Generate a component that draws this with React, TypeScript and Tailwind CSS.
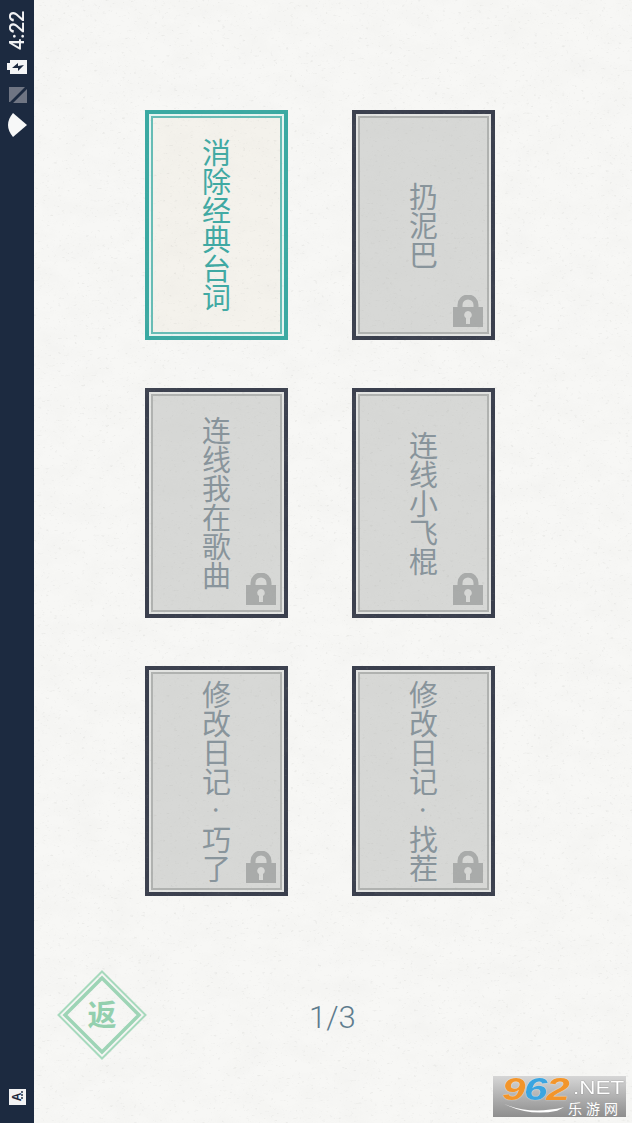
const cards = [
  { title: "消除经典台词", active: true },
  { title: "扔泥巴" },
  { title: "连线我在歌曲" },
  { title: "连线小飞棍" },
  { title: "修改日记·巧了" },
  { title: "修改日记·找茬" },
];

const cjk = "font-['Noto_Sans_CJK_SC','Noto_Sans',sans-serif]";

function Lock() {
  return (
    <svg viewBox="0 0 30 32" className="absolute right-[8px] bottom-[9px] w-[30px] h-[32px]">
      <path d="M7 14 V10 A8 8 0 0 1 23 10 V14" fill="none" stroke="#a9abaa" strokeWidth="5" />
      <path
        fillRule="evenodd"
        fill="#a9abaa"
        d="M0 12 H30 V32 H0 Z M15 16 a3.8 3.8 0 0 0 -2 7 V29 h4 v-6 A3.8 3.8 0 0 0 15 16 Z"
      />
    </svg>
  );
}

function Card({ title, active }: { title: string; active?: boolean }) {
  const [head, tail] = title.split("·");
  return (
    <div
      className={
        active
          ? "relative h-[230px] border-4 border-[#3aa9a2] bg-[#e6f4f1] p-[2px]"
          : "relative h-[230px] border-4 border-[#3a3f4d] bg-[#e3e4e2] p-[2px]"
      }
    >
      <div
        className={
          active
            ? "h-full border-2 border-[#66bcb5] bg-[#f4f2ec] flex items-center justify-center"
            : "h-full border-2 border-[#b0b2b0] bg-[#d7d8d6] flex items-center justify-center"
        }
      >
        <span
          className={
            (active ? "text-[#3fa9a3] " : "text-[#88949b] ") +
            cjk +
            " [writing-mode:vertical-rl] text-[29px] leading-[30px] font-normal"
          }
        >
          {head}
          {tail && <span className="inline-block h-[29px] text-center text-[16px]">·</span>}
          {tail}
        </span>
      </div>
      {!active && <Lock />}
    </div>
  );
}

function StatusBar() {
  return (
    <div className="w-[34px] shrink-0 bg-[#1c2a40] flex flex-col items-center justify-between pt-[12px] pb-[18px]">
      <div className="flex flex-col items-center">
        <span className="h-[38px] font-['Roboto',sans-serif] font-medium text-[20px] leading-[20px] text-[#f2f3f5] [writing-mode:vertical-rl] rotate-180">
          4:22
        </span>
        {/* battery, charging */}
        <svg viewBox="0 0 20 15" className="w-[20px] h-[15px] mt-[9px]">
          <path d="M0 4 H3 V1 H20 V15 H3 V11 H0 Z" fill="#f4f5f6" />
          <path d="M5 9 L11 4 L11 7 L17 6 L11 12 L11 9 Z" fill="#1c2a40" />
        </svg>
        {/* no signal */}
        <svg viewBox="0 0 19 17" className="w-[19px] h-[17px] mt-[13px]">
          <path d="M1 0 H17 L2 15 H1 Z M19 2 V16 H5 Z" fill="#6f7583" />
        </svg>
        {/* wifi */}
        <svg viewBox="0 0 20 24" className="w-[20px] h-[24px] mt-[9px]">
          <path d="M20 12 L6 0 Q-4 12 6 24 Z" fill="#f7f8f8" />
        </svg>
      </div>
      <div className="relative w-[17px] h-[16px] bg-[#f2f3f4] flex items-center justify-center">
        <span className="font-['Liberation_Sans',sans-serif] font-bold text-[12px] leading-none text-[#1c2a40] -rotate-90">
          A
        </span>
        <svg viewBox="0 0 3 8" className="absolute right-[2px] top-[2px] w-[3px] h-[8px]">
          <path d="M0 0 H2 V2 H0 Z M0 3 H2 V5 H0 Z M0 6 H2 V8 H0 Z" fill="#5a6474" />
        </svg>
      </div>
    </div>
  );
}

function BackButton() {
  return (
    <div className="relative w-[90px] h-[90px] flex items-center justify-center pb-[3px]">
      <svg viewBox="0 0 90 90" className="absolute inset-0 w-full h-full">
        <polygon points="45,1.5 88.5,45 45,88.5 1.5,45" fill="none" stroke="#a6dabd" strokeWidth="2" />
        <polygon points="45,8 82,45 45,82 8,45" fill="none" stroke="#9dd5b6" strokeWidth="3.5" />
      </svg>
      <span className={"relative text-[29px] leading-none font-bold text-[#93d0ae] " + cjk}>返</span>
    </div>
  );
}

function Watermark() {
  return (
    <div className="absolute right-[6px] bottom-[6px] w-[133px] h-[41px] bg-gradient-to-b from-[#d6d6d6] to-[#8e8e8e]">
      <span className="absolute left-[9px] top-0 origin-left scale-x-[1.36] font-['Liberation_Sans',sans-serif] font-bold italic text-[31px] leading-[28px] tracking-[-1px] [text-shadow:0_0_1px_#ffffff]">
        <span className="text-[#f2952b]">9</span>
        <span className="text-[#3ba5e0]">6</span>
        <span className="text-[#f2952b]">2</span>
      </span>
      <span className="absolute left-[80px] top-[3px] origin-left scale-x-[1.25] font-['Liberation_Sans',sans-serif] text-[18px] leading-[18px] text-white [text-shadow:0_0_1px_#666666]">
        .NET
      </span>
      <span className={"absolute right-[4px] bottom-[1px] text-[14px] leading-[16px] text-white tracking-[4px] " + cjk}>
        乐游网
      </span>
      <svg viewBox="0 0 70 14" className="absolute left-[7px] bottom-[2px] w-[68px] h-[12px]">
        <path d="M0 1 Q30 14 70 5 L62 9 Q30 16 0 1 Z" fill="#ffffff" />
      </svg>
    </div>
  );
}

export default function App() {
  return (
    <div className="relative w-[632px] h-[1123px] flex overflow-hidden">
      <StatusBar />
      <main className="relative flex-1 bg-[#f7f7f5] flex flex-col">
        <div className="relative grid grid-cols-[143px_143px] gap-x-[64px] gap-y-[48px] ml-[111px] mt-[110px]">
          {cards.map((c) => (
            <Card key={c.title} title={c.title} active={c.active} />
          ))}
        </div>

        <div className="relative flex items-center ml-[23px] mt-[74px]">
          <BackButton />
          <span className="ml-[162px] mt-[4px] font-['Roboto',sans-serif] font-light text-[31px] leading-none text-[#5d7b8d]">
            1/3
          </span>
        </div>

        {/* paper grain: soft mottling plus sparse flecks */}
        <svg className="absolute inset-0 w-full h-full pointer-events-none">
          <filter id="mottle">
            <feTurbulence type="fractalNoise" baseFrequency="0.03 0.05" numOctaves="4" seed="3" />
            <feColorMatrix values="0 0 0 0 0.5 0 0 0 0 0.5 0 0 0 0 0.48 0 0 0 0.5 -0.18" />
          </filter>
          <filter id="flecks">
            <feTurbulence type="fractalNoise" baseFrequency="0.25 0.4" numOctaves="3" seed="11" />
            <feColorMatrix values="0 0 0 0 0.35 0 0 0 0 0.35 0 0 0 0 0.33 0 0 0 5 -3.3" />
          </filter>
          <rect width="100%" height="100%" filter="url(#mottle)" opacity="0.2" />
          <rect width="100%" height="100%" filter="url(#flecks)" opacity="0.12" />
        </svg>
        <Watermark />
      </main>
    </div>
  );
}
